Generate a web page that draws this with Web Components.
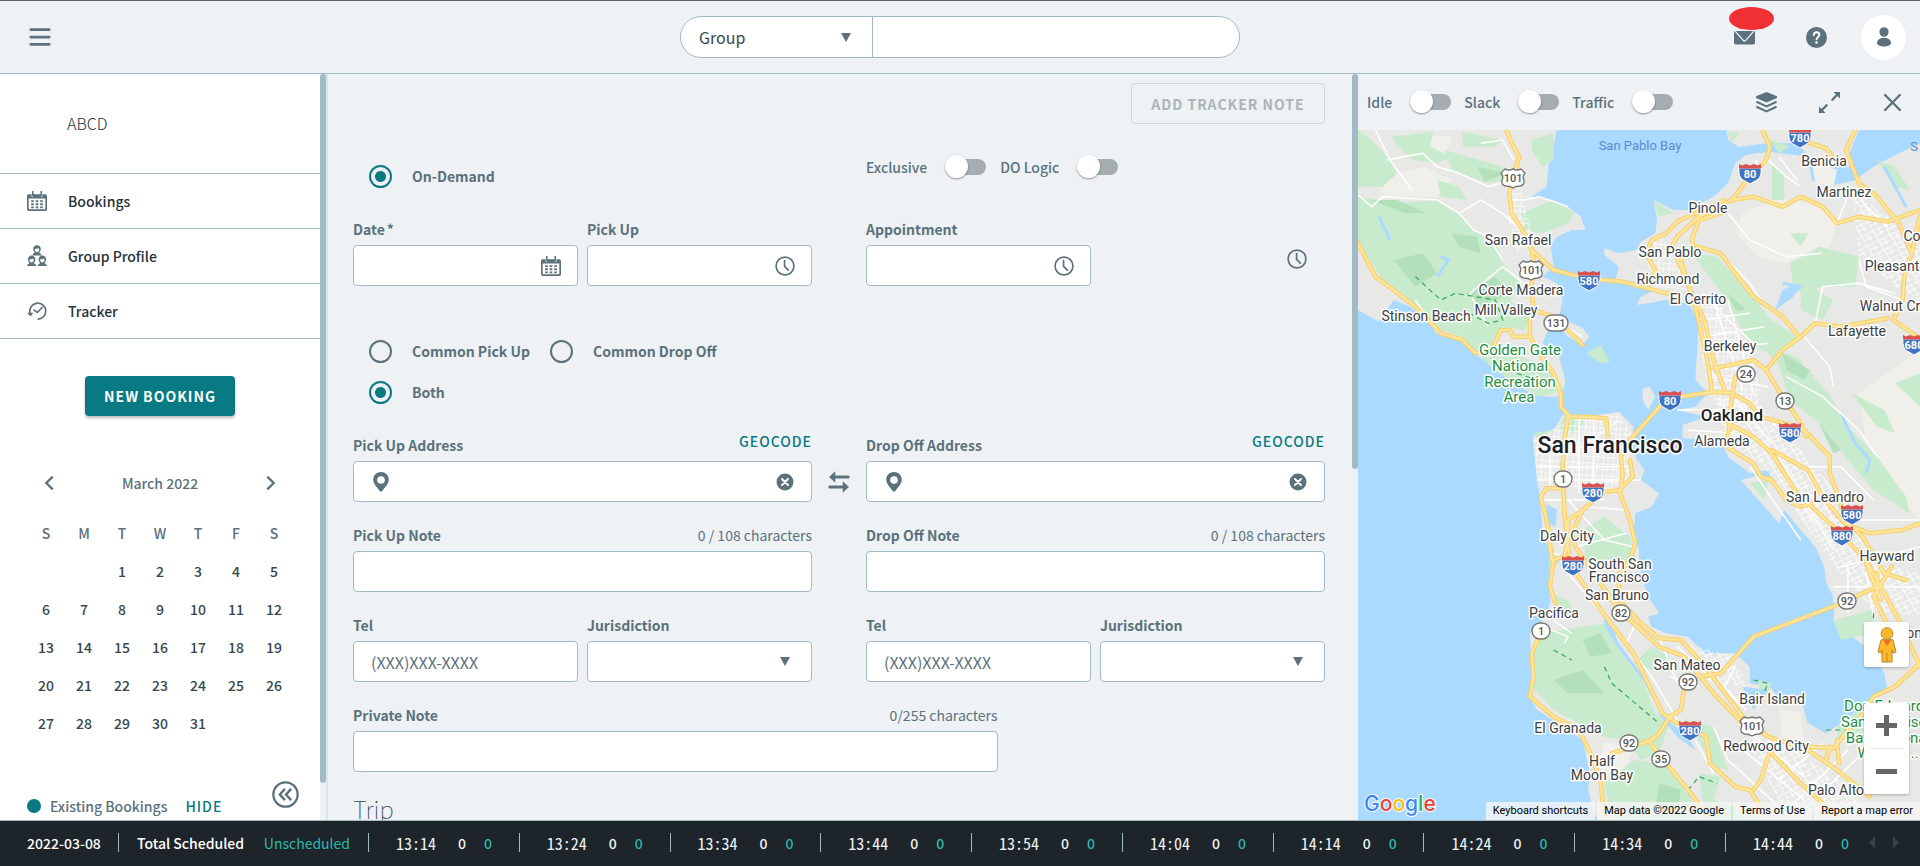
<!DOCTYPE html>
<html lang="en">
<head>
<meta charset="utf-8">
<title>Bookings</title>
<style>
body { margin: 0; font-family: "Noto Sans CJK SC", sans-serif; color: #5b717b; }
</style>
</head>
<body>
<booking-app></booking-app>
<script>
const BASE = `
  :host, * { box-sizing: border-box; }
  button, input, select { font: inherit; color: inherit; margin: 0; }
  button { background: none; border: 0; padding: 0; cursor: pointer; }
`;
function define(name, render) {
  customElements.define(name, class extends HTMLElement {
    connectedCallback() {
      if (this.shadowRoot) return;
      const tpl = document.createElement('template');
      tpl.innerHTML = render(this);
      this.attachShadow({ mode: 'open' }).append(tpl.content.cloneNode(true));
      const base = document.createElement('style');
      base.textContent = BASE;
      this.shadowRoot.prepend(base);
    }
  });
}
const attr = (el, n, d = '') => el.getAttribute(n) ?? d;

/* ---------- icons ---------- */
const ICONS = {
  menu: `<path d="M2 4h20M2 12h20M2 20h20" stroke="currentColor" stroke-width="3" stroke-linecap="round"/>`,
  calendar: `<path fill="currentColor" fill-rule="evenodd" d="M2 4h3.500v3h1.500V4h10v3h1.500V4H22q2 0 2 2v16q0 2-2 2H2q-2 0-2-2V6q0-2 2-2zM2 9V21q0 1 1 1h18q1 0 1-1V9z"/><g fill="currentColor"><path d="M6 0h1.800v6H6zM16.200 0H18v6h-1.800zM5 11h3.200v2.200H5zM10.400 11h3.200v2.200h-3.200zM15.800 11h3.200v2.200h-3.200zM5 14.800h3.200V17H5zM10.400 14.800h3.200V17h-3.200zM15.800 14.800h3.200V17h-3.200zM5 18.500h3.200v2.200H5zM10.400 18.500h3.200v2.200h-3.200zM15.800 18.500h3.200v2.200h-3.200z"/></g>`,
  group: `<g fill="currentColor"><path d="M12-1a4.500 4.500 0 0 1 4.500 4.700c0 1.800-.7 2.900-1.700 3.900 0 1.400 2.400 1.600 2.800 3.900H6.400c.4-2.300 2.800-2.500 2.800-3.900-1-1-1.700-2.100-1.700-3.900A4.500 4.500 0 0 1 12-1z"/><path d="M5.600 11.500a4.500 4.500 0 0 1 4.500 4.700c0 1.800-.7 2.900-1.700 3.900 0 1.400 2.400 1.600 2.800 3.900H0c.4-2.300 2.800-2.500 2.800-3.900-1-1-1.700-2.100-1.700-3.900a4.500 4.500 0 0 1 4.500-4.700zM18.400 11.500a4.500 4.500 0 0 1 4.500 4.700c0 1.800-.7 2.900-1.700 3.900 0 1.400 2.400 1.600 2.800 3.900H12.800c.4-2.300 2.800-2.500 2.800-3.900-1-1-1.700-2.100-1.700-3.900a4.500 4.500 0 0 1 4.500-4.700z"/></g><g fill="#fff"><path d="M9.300 3.500c2 0 3.400-.4 4.200-1.100.3.700.7 1 1.200 1.100 0 2.200-1.100 3.900-2.700 3.900S9.300 5.700 9.300 3.500zM2.900 16c2 0 3.400-.4 4.200-1.100.3.700.7 1 1.200 1.100 0 2.200-1.100 3.900-2.700 3.900S2.900 18.200 2.900 16zM15.700 16c2 0 3.400-.4 4.200-1.100.3.700.7 1 1.200 1.100 0 2.200-1.100 3.900-2.700 3.900s-2.700-1.700-2.700-3.900z"/></g>`,
  tracker: `<g fill="none" stroke="currentColor" stroke-width="2" stroke-linecap="round"><path d="M3.600 14.500A9.600 9.600 0 1 1 13.500 21.800"/><path d="M8.500 11l4 2.800 5.500-6"/></g><path fill="currentColor" d="M0 14h7.500L4.200 18.500z"/>`,
  left: `<path d="M15 5l-7 7 7 7" fill="none" stroke="currentColor" stroke-width="2.500"/>`,
  right: `<path d="M9 5l7 7-7 7" fill="none" stroke="currentColor" stroke-width="2.500"/>`,
  collapse: `<g fill="none" stroke="currentColor"><circle cx="12" cy="12" r="10.800" stroke-width="2"/><path d="M11.500 7L7 12l4.500 5M17 7l-4.500 5 4.500 5" stroke-width="2.200"/></g>`,
  clock: `<g fill="none" stroke="currentColor"><circle cx="12" cy="12" r="10.700" stroke-width="2"/><path d="M11.500 5.500v7l4.500 4.500" stroke-width="2" stroke-linecap="round"/></g>`,
  pin: `<path fill="currentColor" fill-rule="evenodd" d="M12 0c5.300 0 9.300 4 9.300 9.300 0 5.200-4.800 9.200-7.800 13.500q-1.500 1.800-3 0C7.500 18.500 2.700 14.500 2.700 9.300 2.700 4 6.700 0 12 0zM12 5a4.600 4.600 0 1 0 0 9.200A4.600 4.600 0 0 0 12 5z"/>`,
  clear: `<circle cx="12" cy="12" r="11.300" fill="currentColor"/><path d="M8 8l8 8M16 8l-8 8" stroke="#fff" stroke-width="2.600" stroke-linecap="round"/>`,
  swap: `<path d="M5 6h18M1 18h18" stroke="currentColor" stroke-width="3.600" stroke-linecap="round"/><path fill="currentColor" d="M7.500-1v14L0 6zM16.500 11v14L24 18z"/>`,
  mail: `<path fill="currentColor" d="M0 4.500h24v13.500q0 2-2 2H2q-2 0-2-2z"/><path d="M1 4.500l9.800 11q1.200 1.200 2.400 0L23 4.500" fill="none" stroke="#eef2f5" stroke-width="1.500"/>`,
  help: `<circle cx="12" cy="12" r="12" fill="currentColor"/><path d="M8.800 9.300q.2-3.300 3.300-3.300t3.200 2.900c0 2.500-3.200 2.600-3.200 5.200" fill="none" stroke="#fff" stroke-width="2.200" stroke-linecap="round"/><circle cx="12" cy="17.700" r="1.500" fill="#fff"/>`,
  user: `<g fill="currentColor"><ellipse cx="12" cy="6" rx="5.500" ry="5.800"/><path d="M3.500 19c.8-4 4-6 8.500-6s7.700 2 8.500 6c0 2.500-3.500 4.500-8.500 4.500S3.500 21.500 3.500 19z"/></g>`,
  layers: `<path fill="currentColor" d="M12 0l12 4.800v2L12 12 0 6.800v-2z"/><path d="M.5 11.200L12 16.400l11.500-5.200M.5 16.900L12 22.100l11.500-5.200" fill="none" stroke="currentColor" stroke-width="2.400" stroke-linejoin="round"/>`,
  expand: `<path d="M21 3l-5.800 5.800M3 21l5.800-5.800" stroke="currentColor" stroke-width="2.600" stroke-linecap="round"/><path fill="currentColor" d="M16.500 0H24v7.500zM7.500 24H0v-7.500z"/>`,
  close: `<path d="M3.500 3.500l17 17M20.500 3.500l-17 17" stroke="currentColor" stroke-width="2.600" stroke-linecap="round"/>`
};
define('ui-icon', el => `<style>
  :host { display: block; flex: none; width: 20px; height: 20px; }
  svg { display: block; width: 100%; height: 100%; overflow: visible; }
</style><svg viewBox="0 0 24 24" aria-hidden="true">${ICONS[attr(el, 'name')]}</svg>`);

/* ---------- controls ---------- */
define('toggle-switch', el => `<style>
  :host { display: block; }
  label { display: flex; align-items: center; font-size: 14px; line-height: 24px; font-weight: 500; gap: 18px; }
  input { appearance: none; position: relative; width: 41px; height: 16px; border-radius: 8px; margin: 0;
    background: linear-gradient(90deg, transparent 8px, #a6adb0 8px); }
  input::before { content: ""; position: absolute; left: 0; top: -4px; width: 23px; height: 23px; border-radius: 50%; background: #fff; box-shadow: 0 1px 2px #0006; }
</style><label>${attr(el, 'label')}<input type="checkbox" role="switch"></label>`);

define('radio-option', el => `<style>
  :host { display: block; }
  label { display: flex; align-items: center; gap: 20px; font-size: 14px; line-height: 24px; font-weight: 700; }
  input { appearance: none; width: 23px; height: 23px; border: 2px solid #5b717b; border-radius: 50%; }
  input:checked { border-color: #077a83; background: radial-gradient(circle, #077a83 5px, transparent 6px); }
</style><label><input type="radio" ${el.hasAttribute('checked') ? 'checked' : ''}>${attr(el, 'label')}</label>`);

define('form-field', el => {
  const type = attr(el, 'type', 'text');
  const control = type === 'select'
    ? `<select id="c"><option></option></select><span class="tri"></span>`
    : `<input id="c" type="text" placeholder="${attr(el, 'placeholder')}">`;
  return `<style>
  :host { display: block; min-width: 0; }
  .top { display: flex; justify-content: space-between; height: 20px; margin-bottom: 6px; font-size: 14px; line-height: 20px; }
  label { font-weight: 700; }
  .req { margin-left: 2px; }
  .note { font-weight: 400; }
  .top button { align-self: start; height: 12px; line-height: 12px; color: #077a83; font-weight: 500; letter-spacing: 1px; }
  .box { display: flex; align-items: center; height: 41px; padding: 0 16px 0 17px; background: #fff; border: 1px solid #a2bac3; border-radius: 4px; }
  input, select { flex: 1; min-width: 0; width: 100%; height: 100%; border: 0; outline: 0; background: none; font-size: 16px; padding: 0; appearance: none; }
  ::placeholder { color: #5b717b; opacity: 1; font-weight: 400; }
  .tri { width: 0; border: 5px solid transparent; border-top: 9px solid #5b717b; border-bottom: 0; margin-right: 5px; }
  .clear { width: 18px; height: 18px; margin-right: 1px; }
</style><div class="top"><label for="c">${attr(el, 'label')}${el.hasAttribute('required') ? '<span class="req">*</span>' : ''}</label>${
    el.hasAttribute('note') ? `<span class="note">${attr(el, 'note')}</span>` : ''}${
    el.hasAttribute('action') ? `<button type="button">${attr(el, 'action')}</button>` : ''}</div>
<div class="box">${el.hasAttribute('pin') ? '<ui-icon name="pin"></ui-icon>' : ''}${control}${
    el.hasAttribute('icon') ? `<button type="button" aria-label="${attr(el, 'icon')}"><ui-icon class="${attr(el, 'icon')}" name="${attr(el, 'icon')}"></ui-icon></button>` : ''}</div>`;
});

/* ---------- header ---------- */
define('app-header', () => `<style>
  :host { display: grid; grid-template-columns: 1fr 560px 1fr; align-items: center; height: 74px; padding: 0 14px; border-top: 1px solid #5f6368; border-bottom: 1px solid #a2bac3; background: #eef2f5; }
  .menu { justify-self: start; margin-left: 15px; }
  .menu ui-icon { width: 22px; height: 22px; }
  .search { display: flex; height: 42px; border: 1px solid #a2bac3; border-radius: 21px; background: #fff; overflow: hidden; }
  .sel { display: flex; align-items: center; width: 192px; padding: 0 21px 0 18px; border-right: 1px solid #a2bac3; }
  select { appearance: none; flex: 1; border: 0; background: none; outline: 0; font-size: 16px; color: #37474f; height: 100%; padding: 0; }
  .tri { border: 5px solid transparent; border-top: 9px solid #5b717b; border-bottom: 0; }
  .search input { flex: 1; min-width: 0; border: 0; outline: 0; background: none; padding: 0 16px; }
  .actions { display: flex; align-items: center; justify-self: end; gap: 46px; }
  .mail { position: relative; display: block; margin-right: 5px; }
  .help { display: block; }
  .badge { position: absolute; left: -5px; top: -20px; width: 45px; height: 23px; border-radius: 50%; background: #f13033; }
  .avatar { display: grid; place-items: center; width: 45px; height: 45px; border-radius: 50%; background: #fff; margin-left: -12px; }
  .mail ui-icon, .help ui-icon { width: 21px; height: 21px; }
</style>
<button class="menu" aria-label="Menu"><ui-icon name="menu"></ui-icon></button>
<div class="search"><div class="sel"><select aria-label="Search by"><option>Group</option></select><span class="tri"></span></div><input type="text" aria-label="Search"></div>
<div class="actions">
  <button class="mail" aria-label="Messages"><ui-icon name="mail"></ui-icon><span class="badge"></span></button>
  <button class="help" aria-label="Help"><ui-icon name="help"></ui-icon></button>
  <button class="avatar" aria-label="Account"><ui-icon name="user"></ui-icon></button>
</div>`);

/* ---------- sidebar ---------- */
define('nav-item', el => `<style>
  :host { display: block; border-bottom: 1px solid #a2bac3; }
  a { display: flex; align-items: center; gap: 21px; height: 54px; padding-left: 27px; font-size: 14px; line-height: 20px; font-weight: 500; color: #263238; text-decoration: none; }
  ui-icon { color: #5b717b; }
</style><a href="#"><ui-icon name="${attr(el, 'icon')}"></ui-icon><slot></slot></a>`);

define('month-calendar', () => {
  const cells = [...Array(2).fill(''), ...Array.from({ length: 31 }, (_, i) => i + 1), '', ''];
  const rows = [];
  for (let i = 0; i < 35; i += 7) rows.push('<tr>' + cells.slice(i, i + 7).map(c => `<td>${c}</td>`).join('') + '</tr>');
  return `<style>
  :host { display: block; width: 266px; margin: 0 auto; font-size: 14px; line-height: 20px; }
  header { display: flex; justify-content: space-between; align-items: center; height: 38px; padding: 0 12px; font-weight: 500; }
  header ui-icon { width: 22px; height: 22px; }
  table { border-collapse: collapse; table-layout: fixed; width: 100%; margin-top: 12px; }
  th, td { height: 38px; padding: 0; text-align: center; font-weight: 500; }
  td { color: #37474f; }
</style><header><button aria-label="Previous month"><ui-icon name="left"></ui-icon></button><span>March 2022</span><button aria-label="Next month"><ui-icon name="right"></ui-icon></button></header>
<table><thead><tr>${[...'SMTWTFS'].map(d => `<th>${d}</th>`).join('')}</tr></thead><tbody>${rows.join('')}</tbody></table>`;
});

define('scroll-rail', () => `<style>
  :host { display: block; flex: none; width: 6px; background: #eef2f5; }
  div { height: var(--thumb); border-radius: 3px; background: #a2bac3; }
</style><div></div>`);

define('side-nav', () => `<style>
  :host { display: flex; background: #fff; min-height: 0; border-right: 2px solid #dbe5ea; overflow: hidden; }
  .body { flex: 1; min-width: 0; position: relative; }
  .org { height: 100px; padding: 38px 0 0 67px; font-size: 16px; line-height: 22px; font-weight: 300; color: #263238; border-bottom: 1px solid #a2bac3; }
  .new { display: block; width: 150px; height: 40px; margin: 37px auto 48px; border-radius: 4px; background: #077a83; color: #fff; font-size: 14px; line-height: 20px; font-weight: 700; letter-spacing: 1px; box-shadow: 0 2px 3px #0004; }
  .legend { display: flex; align-items: center; margin-top: 53px; padding-left: 27px; font-size: 14px; line-height: 22px; font-weight: 500; }
  .dot { width: 14px; height: 14px; border-radius: 50%; background: #077a83; margin-right: 9px; }
  .hide { color: #077a83; font-weight: 500; letter-spacing: 1px; margin-left: 18px; line-height: 22px; }
  .collapse { position: absolute; right: 21px; bottom: 12px; }
  .collapse ui-icon { width: 27px; height: 27px; }
  scroll-rail { --thumb: 95%; }
</style>
<div class="body">
  <div class="org">ABCD</div>
  <nav><nav-item icon="calendar">Bookings</nav-item><nav-item icon="group">Group Profile</nav-item><nav-item icon="tracker">Tracker</nav-item></nav>
  <button class="new">NEW BOOKING</button>
  <month-calendar></month-calendar>
  <div class="legend"><span class="dot"></span>Existing Bookings<button class="hide">HIDE</button></div>
  <button class="collapse" aria-label="Collapse"><ui-icon name="collapse"></ui-icon></button>
</div>
<scroll-rail></scroll-rail>`);

/* ---------- form ---------- */
define('booking-form', () => `<style>
  :host { display: flex; min-width: 0; min-height: 0; overflow: hidden; background: #eef2f5; }
  form { flex: 1; min-width: 0; padding: 9px 27px 0 25px; }
  .add { display: block; height: 41px; width: 194px; margin-left: auto; border: 1px solid #cdd6da; border-radius: 4px; font-size: 14px; line-height: 20px; font-weight: 700; letter-spacing: 1px; color: #a9b5ba; }
  .two { display: grid; grid-template-columns: 1fr 1fr; column-gap: 54px; }
  .pair { display: grid; grid-template-columns: 1fr 1fr; column-gap: 9px; }
  .mode { margin-top: 31px; }
  .mode radio-option { padding: 9px 0 0 16px; }
  .switches { display: flex; gap: 14px; }
  .when > div:last-child ui-icon { justify-self: end; margin: 30px 18px 0 0; }
  .common { display: grid; grid-template-columns: auto 1fr; gap: 17px 20px; padding-left: 16px; margin: 53px 0 31px; }
  .addr { display: grid; grid-template-columns: 1fr 54px 1fr; }
  .addr button { align-self: end; justify-self: center; height: 41px; }
  .two + .two, .addr + .two, .private { margin-top: 23px; }
  .two.when { margin-top: 31px; }
  .private { width: calc(66% + 3px); }
  h2 { margin: 19px 0 0; font-size: 24px; line-height: 36px; font-weight: 100; color: #37474f; }
  scroll-rail { --thumb: 53%; }
</style>
<form>
  <button class="add" type="button" disabled>ADD TRACKER NOTE</button>
  <div class="two mode">
    <radio-option label="On-Demand" checked></radio-option>
    <div class="switches"><toggle-switch label="Exclusive"></toggle-switch><toggle-switch label="DO Logic"></toggle-switch></div>
  </div>
  <div class="two when">
    <div class="pair"><form-field label="Date" required icon="calendar"></form-field><form-field label="Pick Up" icon="clock"></form-field></div>
    <div class="pair"><form-field label="Appointment" icon="clock"></form-field><ui-icon name="clock"></ui-icon></div>
  </div>
  <div class="common">
    <radio-option label="Common Pick Up"></radio-option><radio-option label="Common Drop Off"></radio-option>
    <radio-option label="Both" checked></radio-option>
  </div>
  <div class="addr">
    <form-field label="Pick Up Address" action="GEOCODE" icon="clear" pin></form-field>
    <button type="button" aria-label="Swap addresses"><ui-icon name="swap"></ui-icon></button>
    <form-field label="Drop Off Address" action="GEOCODE" icon="clear" pin></form-field>
  </div>
  <div class="two">
    <form-field label="Pick Up Note" note="0 / 108 characters"></form-field>
    <form-field label="Drop Off Note" note="0 / 108 characters"></form-field>
  </div>
  <div class="two">
    <div class="pair"><form-field label="Tel" placeholder="(XXX)XXX-XXXX"></form-field><form-field label="Jurisdiction" type="select"></form-field></div>
    <div class="pair"><form-field label="Tel" placeholder="(XXX)XXX-XXXX"></form-field><form-field label="Jurisdiction" type="select"></form-field></div>
  </div>
  <form-field class="private" label="Private Note" note="0/255 characters"></form-field>
  <h2>Trip</h2>
</form>
<scroll-rail></scroll-rail>`);

/* ---------- map ---------- */
/* Roads are drawn twice: a darker casing, then the lighter fill. */
const HIGHWAYS = [
  'M430 390L445 430 465 470 450 530 438 580 445 640 480 700 500 750 560 810 650 835 750 845 870 880 905 882',
  'M500 750L508 800 498 860 505 930 495 960 495 1010 520 1060 560 1120 580 1180 580 1220 605 1250 650 1250 705 1255 710 1320',
  'M22 730L70 830 120 870 180 920 250 1000 310 1020 345 1060 390 1050 415 990 440 990 450 1010 495 1010',
  'M505 930L560 950 600 990 640 1035',
  'M1135 390L1155 440 1145 480 1100 530 1050 600 960 650 900 710 885 740 910 800 940 880 965 990 985 1090 995 1170',
  'M1030 600L900 665 870 700 830 720 815 760 840 810 825 850',
  'M1020 640L960 660 940 720 945 740 910 780 935 870 975 960 1000 1080 1030 1170',
  'M1050 600L1110 590 1190 620 1240 590 1300 620 1340 670 1400 650 1480 665 1568 630',
  'M1390 390L1365 450 1400 550 1450 590 1510 670 1545 760 1525 830 1520 900 1495 960 1560 1010',
  'M1240 420L1310 445 1330 475',
  'M1568 650L1545 760M955 740L1020 760 1060 820 1110 890 1190 950 1235 1010',
  'M770 1320L860 1210 910 1190 1000 1175 1050 1180 1100 1210 1130 1250 1210 1275 1250 1290 1320 1370 1320 1420 1350 1510 1360 1560 1410 1610 1470 1720 1530 1740',
  'M1000 1105L1110 1080 1145 1110 1190 1050 1240 1010 1280 970 1350 980 1480 955',
  'M1145 1110L1190 1190 1240 1270 1255 1310',
  'M1060 1130L1050 1200 1040 1270 1110 1310 1160 1360 1230 1480 1330 1580 1420 1680 1450 1740 1510 1860 1568 2000',
  'M1045 1270L1035 1340 1110 1390 1130 1430 1160 1440 1200 1500 1240 1520 1270 1510',
  'M1160 1350L1260 1410 1300 1490 1360 1570 1430 1600 1520 1590 1568 1570',
  'M770 1320L745 1370 750 1420 745 1470 700 1475 640 1530 600 1560 600 1640 610 1700 690 1830 780 1960 820 2050 860 2140 900 2170 980 2210 990 2290 1060 2360 1100 2370 1140 2440',
  'M770 1380L778 1430 740 1470 770 1560 785 1630 770 1680 740 1720 740 1800 800 1870 850 1915 910 1920 970 1990 1080 2150 1150 2210 1260 2250 1340 2310 1430 2390',
  'M600 1250L590 1320 585 1400 590 1540 600 1650',
  'M585 1465L540 1465 525 1490 545 1580 555 1680 590 1670 600 1620M560 1680L550 1760 565 1810',
  'M640 1530L610 1600 620 1640 670 1720 740 1830 850 1940 920 1970 1000 2080 1080 2170',
  'M525 1900L500 1960 505 2030 495 2090 560 2150 630 2190 670 2280 690 2350 700 2460',
  'M960 2030L1020 2020 1110 1910 1340 1815 1450 1760 1450 1720',
  'M920 2060L910 2130 880 2150 850 2200 830 2220 720 2260',
  'M820 2220L870 2290 930 2370 980 2440',
  'M1160 2240L1130 2340 1110 2370M1160 2260L1230 2340 1340 2450M1320 2240L1310 2280M1340 2220L1345 2290M1260 2240L1330 2245 1370 2190 1400 2160 1440 2090 1500 2060 1568 1990',
  'M1420 1690L1460 1800M1490 1700L1440 1790 1490 1900'
];
const MINOR = [
  'M22 585L60 620 90 590 240 600 300 640 340 690 380 710 420 780M70 390L110 480 170 570M100 480L200 460 240 500 300 520 380 560 430 545',
  'M440 600L480 600 520 590 600 620M360 430L420 420 450 480M300 640L360 600 420 640 470 690',
  'M1150 480L1200 530 1240 560M1180 470L1230 540M1340 670L1380 560 1420 620 1480 680M1080 560L1120 480M1040 640L1100 720 1200 770 1300 760',
  'M1020 760L1100 850 1150 930M1250 1010L1320 1100 1330 1160M1280 970L1300 860 1400 850 1500 880M1400 780L1420 860 1520 900M1120 1040L1040 960 970 880',
  'M1200 1130L1300 1190 1400 1290 1450 1370M1260 1400L1350 1400 1440 1500M1180 1370L1330 1650M1130 1320L1280 1570M1100 1400L1240 1620M1300 1560L1568 1560M1350 1700L1568 1640M1330 1760L1568 1760M1370 1690V1840M1420 1720L1440 1850',
  'M1000 900L1080 1170M1040 900L1110 1180M960 960L1100 940M970 1010L1140 980M980 1050L1150 1030M990 1130L1150 1160M900 1230L1050 1230M930 1290L1060 1300M1060 1200L1160 1330M1090 1190L1210 1320',
  'M515 1400H760M515 1440H800M520 1500H700M530 1340H760M550 1310V1460M630 1260V1480M670 1250V1450M740 1260L640 1340M600 1500L700 1620 780 1640M620 1640L760 1600M650 1520L760 1530',
  'M560 1660L640 1690 740 1680M700 1740L800 1720M600 1720L740 1900 830 2030 900 2160M790 1860L760 1930M850 1910L900 2050M900 1940L1080 2120M880 2030L960 2060M1060 2000L1030 2060 1090 2130',
  'M1100 2200L1250 2330M1070 2240L1250 2400M1000 2180L1040 2280 1200 2440M1180 2340L1300 2230M1230 2400L1370 2250M950 2220L1000 2320M1240 2440L1400 2270M530 1880L600 1910 590 1930M560 1860L610 1900',
  'M560 960L640 1010M380 980L330 880 420 800 500 870M240 1000L180 900'
];
const GREENS = [
  'M22 590L120 610 240 600 320 660 350 700 400 720 420 790 470 850 440 900 500 950 480 990 420 980 395 1040 350 1060 310 1010 250 990 160 900 90 840 22 730z',
  'M22 390L60 420 110 480 130 520 90 560 22 560zM110 410L230 395 220 440 280 470 240 490 170 480zM260 450L420 500 430 540 380 550 280 510zM240 540L300 560 320 600 250 590zM310 395L420 420 400 440 310 440z',
  'M470 640L560 600 620 640 600 670 530 700 480 690zM500 420L560 400 560 480 530 500 500 450zM355 1070L470 1070 560 1110 590 1170 520 1190 450 1150 400 1110z',
  'M650 1060L690 1035 715 1085 690 1090zM570 1290L590 1245 650 1255 620 1300zM505 1300L560 1290 520 1320zM835 600L890 640 850 650z',
  'M1160 490L1195 520 1195 600 1160 600zM1210 700L1260 700 1240 740zM1210 790L1290 740 1400 770 1390 860 1290 860 1270 890 1220 860zM940 760L1010 770 1100 880 1160 960 1230 1010 1170 1060 1200 1060 1240 1080 1260 1140 1210 1130 1150 1060 1100 1030 1030 890z',
  'M1170 1060L1260 1110 1330 1200 1350 1260 1450 1370 1530 1490 1540 1540 1440 1470 1370 1380 1290 1270 1210 1200zM1380 1180L1470 1230 1500 1300 1450 1280zM1500 1150L1568 1120 1568 1220zM1240 840L1330 900 1300 960 1240 930z',
  'M520 1900L640 1880 700 1870 740 1950 800 2030 840 2140 880 2170 850 2260 800 2280 760 2220 700 2210 560 2130 500 2060 500 1990z',
  'M550 1780L600 1800 620 1840 570 1850zM540 1520L560 1650 580 1680 550 1720zM640 1590L700 1550 770 1610 790 1690 720 1680 650 1680zM780 1990L830 1940 880 1970 860 2020z',
  'M780 2280L860 2290 930 2370 960 2460 720 2460 700 2350zM960 2320L1020 2330 1000 2400 1060 2420 1100 2460 980 2460zM930 2160L1000 2180 1040 2310 1000 2300zM1120 2040L1160 2050 1140 2100z',
  'M1330 1860L1440 1830 1440 1900 1350 1920zM1340 2180L1400 2130 1440 2180 1340 2220zM1100 1450L1150 1440 1140 1500z',
  'M1120 395L1150 410 1180 460 1210 440 1160 420zM1040 395L1070 400 1050 430zM1450 480L1500 500 1540 570 1500 560z'
];
const shieldI = (x, y, t) => `<g transform="translate(${x} ${y})"><path d="M-11-5Q-12 4-7 7-3 9 0 11 3 9 7 7 12 4 11-5z" fill="#3f75c4" stroke="#fff"/><path d="M-11-4.500v-4.500l3 1.500 4-1.500 4 1.500 4-1.500 4 1.500 3-1.500v4.500z" fill="#d9524f"/><text y="5" class="sh">${t}</text></g>`;
const shieldS = (x, y, t) => { const w = t.length > 2 ? 24 : 18; return `<g transform="translate(${x} ${y})"><rect x="${-w / 2}" y="-8" width="${w}" height="16" rx="8" fill="#fff" stroke="#777" stroke-width="1.400"/><text y="4" class="sh n">${t}</text></g>`; };
const shieldU = (x, y, t) => `<g transform="translate(${x} ${y})"><path d="M-8-9q4 2 8 0 4 2 8 0l4 4q-3 4-1 7 1 5-4 6-4 0-7 2-3-2-7-2-5-1-4-6 2-3-1-7z" fill="#fff" stroke="#777" stroke-width="1.400"/><text y="4" class="sh n">${t}</text></g>`;
const label = (x, y, t, c = '') => `<text x="${x}" y="${y}" class="${c}">${t}</text>`;

define('bay-map', () => `<style>
  :host { display: block; position: relative; overflow: hidden; background: #aadaff; }
  svg.map { position: absolute; inset: 0; width: 100%; height: 100%; }
  text { font: 400 14px Roboto, sans-serif; fill: #3c4043; text-anchor: middle; paint-order: stroke; stroke: #fff; stroke-width: 3px; stroke-linejoin: round; }
  text.sh { font-size: 11px; font-weight: 700; stroke: none; fill: #fff; }
  text.sh.n { fill: #555; font-weight: 500; }
  text.park { fill: #1e8e3e; font-size: 15px; } text.water { fill: #5b8bd0; stroke: none; font-size: 13px; }
  text.sf { font-size: 23px; font-weight: 500; fill: #202124; } text.oak { font-size: 17px; font-weight: 500; fill: #202124; }
  path.l { vector-effect: non-scaling-stroke; }
  .ctl { position: absolute; right: 11px; width: 45px; background: #fff; border-radius: 2px; box-shadow: 0 1px 3px #0004; display: grid; place-items: center; }
  .peg { bottom: 153px; height: 45px; }
  .zoom { bottom: 26px; height: 91px; }
  .zoom button { width: 45px; height: 45px; display: grid; place-items: center; }
  .zoom hr { width: 34px; margin: 0; border: 0; border-top: 1px solid #e6e6e6; }
  .logo { position: absolute; left: 6px; bottom: 1px; width: 74px; height: 28px; }
  .logo text { font: 500 21px Inter, sans-serif; text-anchor: start; stroke-width: 2px; }
  .terms { position: absolute; right: 0; bottom: 0; display: flex; height: 18px; font: 11px/18px Roboto, sans-serif; color: #000; }
  .terms > * { background: #f5f5f5cc; padding: 0 7px; color: #000; text-decoration: none; margin-left: 2px; white-space: nowrap; }
</style>
<svg class="map" viewBox="1358 130 562 690" preserveAspectRatio="xMinYMin slice" role="img" aria-label="Map of the San Francisco Bay Area">
<defs>
  <pattern id="grid" width="36" height="32" patternUnits="userSpaceOnUse" patternTransform="rotate(-28)"><path d="M0 8H36M10 0V32M26 8V32M10 22H36" stroke="#fff" stroke-width="2.500" fill="none"/></pattern>
  <pattern id="grid2" width="28" height="36" patternUnits="userSpaceOnUse" patternTransform="rotate(4)"><path d="M0 8H28M8 0V36M20 8V36M0 24H28" stroke="#fff" stroke-width="2.200" fill="none"/></pattern>
</defs>
<g transform="translate(1350 0) scale(.3635 .33333)">
  <g stroke="#bfe1fb" stroke-width="1.500" opacity=".6"><path d="M93 390V2460M885 390V2460M22 648H1568M22 1513H1568M22 2377H1568"/></g>
  <g fill="#e8e8e6">
    <path d="M22 390H568L560 440 548 480 540 560 500 590 560 600 600 620 635 650 648 690 610 690 570 710 552 735 560 800 530 830 570 850 585 900 575 950 640 985 658 1010 640 1035 600 1010 580 985 545 990 530 1030 575 1070 592 1140 590 1160 570 1190 540 1190 500 1180 450 1150 410 1110 340 1060 300 1020 240 1000 210 960 165 920 120 900 80 965 22 930z"/>
    <path d="M503 1310L560 1290 585 1245 650 1250 740 1235 780 1280 775 1340 790 1380 810 1410 800 1440 850 1480 830 1520 785 1540 780 1600 795 1650 795 1700 820 1790 850 1840 820 1850 830 1880 870 1900 930 1910 975 1960 1060 1960 1100 2000 1100 2050 1155 2060 1180 2095 1240 2100 1260 2170 1310 2200 1350 2170 1410 2120 1440 2090 1480 2080 1470 2020 1440 1960 1370 1900 1330 1860 1335 1800 1310 1750 1305 1700 1280 1640 1240 1590 1195 1530 1180 1570 1075 1440 1130 1425 1160 1430 1150 1410 1100 1420 1040 1370 1020 1320 915 1315 915 1275 980 1250 900 1230 950 1220 985 1180 950 1140 960 960 930 910 870 900 790 915 800 890 830 875 780 860 730 840 740 800 700 765 700 745 740 760 790 750 800 725 840 700 845 660 835 600 890 630 930 630 1000 590 1040 550 1060 490 1090 465 1150 455 1260 470 1270 540 1310 560 1390 540 1440 500 1490 470 1568 430V2460H680L665 2410 655 2370 660 2320 640 2220 600 2190 515 2130 492 2090 500 2010 495 1900 540 1850 550 1810 548 1650 530 1600 520 1470 515 1450z"/>
    <path d="M1035 390H1400L1370 470 1385 500 1340 500 1270 480 1230 430 1150 430 1070 440 1040 420zM805 1165L825 1160 840 1190 820 1230 805 1200zM1320 1690H1568V2060L1500 2060 1480 1960 1440 1830 1330 1810z"/>
  </g>
  <g fill="#f1efe9"><path d="M1180 590L1300 620 1340 670 1320 740 1200 790 1120 770 1060 700 1080 640zM1400 1180L1568 1050V1560L1500 1480 1420 1330zM150 400L280 410 260 470 200 450zM60 540L200 500 280 540 240 590 100 590zM1180 2120L1240 2140 1250 2220 1190 2220zM700 2230L790 2230 740 2340 680 2300zM1270 480L1340 510 1330 560 1280 550z"/></g>
  <g fill="#c9ebcd"><path d="${GREENS.join('')}"/></g>
  <g fill="#b3e0bb"><path d="M60 600L130 600 210 640 150 640zM350 500L430 520 370 545zM120 780L200 760 240 820 180 860zM280 700L350 710 360 760 300 740zM1190 1060L1265 1110 1250 1140 1200 1110zM640 1920L690 1900 720 1960 660 1970zM560 2040L640 2010 700 2080 600 2080zM850 2350L910 2370 900 2440 840 2420zM1290 1270L1350 1350 1330 1360zM1040 880L1090 930 1060 930zM320 880L400 830 440 880 360 920z"/></g>
  <g fill="url(#grid2)"><path d="M505 1320L600 1260 740 1240 775 1300 780 1440 700 1480 515 1440zM940 880L1010 900 1100 1040 1130 1180 1050 1260 985 1180 960 1000zM850 700L900 780 930 870 840 860 810 760zM430 480L470 560 500 700 460 760 430 640z"/></g>
  <g fill="url(#grid)"><path d="M1000 1190L1120 1200 1200 1300 1340 1480 1460 1690 1568 1720V1850L1440 1830 1320 1680 1200 1490 1130 1390 1040 1330zM1380 570L1500 670 1568 700V900L1500 860 1400 770zM1050 2140L1180 2220 1400 2380 1400 2440 1200 2440zM920 1930L1060 1970 1090 2060 990 2050z"/></g>
  <g fill="none" stroke="#aadaff" stroke-width="3"><path class="l" d="M700 1860L740 1940 810 2040 850 2120M1350 1240L1390 1330 1430 1380 1420 1420M1470 500L1500 560 1530 620M240 830L270 780 250 770M80 650L110 720 100 690M1190 850L1240 860 1200 900"/></g>
  <g fill="#aadaff"><path d="M540 1510L570 1530 565 1580 545 1570zM700 1880L720 1870 740 1940zM840 2130L930 2210 950 2250 900 2210zM1190 870L1230 850 1220 890 1170 930zM1080 2060L1150 2070 1110 2130zM1190 2080L1240 2080 1220 2110z"/></g>
  <g fill="none" stroke="#fff" stroke-width="1.500" stroke-linejoin="round"><path class="l" d="${MINOR.join('')}"/></g>
  <g fill="none" stroke="#34a35c" stroke-width="1.200" stroke-dasharray="5 4"><path class="l" d="M700 2000L720 2050 850 2170M180 830L250 900 290 880 400 900 420 960 380 970 310 930M460 1120L540 1150M560 1950L610 1980M930 2370L960 2330 1010 2350M1110 2040L1150 2050 1130 2100M1310 2190L1380 2190M1440 1840V1910"/></g>
  <g fill="none" stroke="#f6cf68" stroke-width="4.500" stroke-linejoin="round" stroke-linecap="round"><path class="l" d="${HIGHWAYS.join('')}"/></g>
  <g fill="none" stroke="#ffe49a" stroke-width="2.500" stroke-linejoin="round" stroke-linecap="round"><path class="l" d="${HIGHWAYS.join('')}"/></g>
</g>
${shieldU(1513, 178, '101')}${shieldU(1531, 270, '101')}${shieldU(1752, 726, '101')}
${shieldI(1800, 137, '780')}${shieldI(1750, 173, '80')}${shieldI(1589, 280, '580')}${shieldI(1670, 400, '80')}${shieldI(1790, 432, '580')}${shieldI(1852, 514, '580')}${shieldI(1842, 535, '880')}${shieldI(1593, 492, '280')}${shieldI(1573, 565, '280')}${shieldI(1690, 730, '280')}${shieldI(1914, 344, '680')}
${shieldS(1556, 323, '131')}${shieldS(1746, 374, '24')}${shieldS(1785, 401, '13')}${shieldS(1563, 479, '1')}${shieldS(1541, 631, '1')}${shieldS(1621, 613, '82')}${shieldS(1847, 601, '92')}${shieldS(1688, 682, '92')}${shieldS(1629, 743, '92')}${shieldS(1661, 759, '35')}
${label(1640, 150, 'San Pablo Bay', 'water')}${label(1914, 151, 'S', 'water')}
${label(1824, 166, 'Benicia')}${label(1844, 197, 'Martinez')}${label(1708, 213, 'Pinole')}${label(1518, 245, 'San Rafael')}${label(1670, 257, 'San Pablo')}${label(1668, 284, 'Richmond')}${label(1521, 295, 'Corte Madera')}${label(1698, 304, 'El Cerrito')}${label(1506, 315, 'Mill Valley')}${label(1426, 321, 'Stinson Beach')}${label(1892, 271, 'Pleasant')}${label(1912, 241, 'Co')}${label(1890, 311, 'Walnut Cr')}${label(1857, 336, 'Lafayette')}${label(1730, 351, 'Berkeley')}
${label(1520, 355, 'Golden Gate', 'park')}${label(1520, 371, 'National', 'park')}${label(1520, 387, 'Recreation', 'park')}${label(1519, 402, 'Area', 'park')}
${label(1732, 421, 'Oakland', 'oak')}${label(1722, 446, 'Alameda')}${label(1610, 453, 'San Francisco', 'sf')}${label(1825, 502, 'San Leandro')}${label(1567, 541, 'Daly City')}${label(1887, 561, 'Hayward')}${label(1620, 569, 'South San')}${label(1619, 582, 'Francisco')}${label(1617, 600, 'San Bruno')}${label(1554, 618, 'Pacifica')}${label(1687, 670, 'San Mateo')}${label(1772, 704, 'Bair Island')}${label(1568, 733, 'El Granada')}${label(1602, 766, 'Half')}${label(1602, 780, 'Moon Bay')}${label(1766, 751, 'Redwood City')}${label(1836, 795, 'Palo Alto')}
${label(1888, 711, 'Don Edwards', 'park')}${label(1888, 727, 'San Francisco', 'park')}${label(1888, 743, 'Bay National', 'park')}${label(1888, 758, 'Wildlife...', 'park')}${label(1914, 638, 'on')}
</svg>
<svg class="logo" viewBox="0 0 74 28" role="img" aria-label="Google"><text x="0" y="20"><tspan fill="#4285f4">G</tspan><tspan fill="#ea4335">o</tspan><tspan fill="#fbbc05">o</tspan><tspan fill="#4285f4">g</tspan><tspan fill="#34a853">l</tspan><tspan fill="#ea4335">e</tspan></text></svg>
<button class="ctl peg" aria-label="Street View"><svg width="20" height="36" viewBox="0 0 20 36"><g fill="#fbb829" stroke="#b8862b"><path d="M4 13Q10 10 16 13L19 25 16 26 15 23V35H5V23L4 26 1 25z"/><circle cx="10" cy="6.500" r="5.800"/></g><path d="M6 13h8l-4 6z" fill="#e8702a"/><path d="M10 26V35" stroke="#b8862b"/></svg></button>
<div class="ctl zoom"><button aria-label="Zoom in"><svg width="21" height="21"><path d="M0 10.500H21M10.500 0V21" stroke="#666" stroke-width="5"/></svg></button><hr><button aria-label="Zoom out"><svg width="21" height="21"><path d="M0 10.500H21" stroke="#666" stroke-width="5"/></svg></button></div>
<div class="terms"><a href="#">Keyboard shortcuts</a><span>Map data ©2022 Google</span><a href="#">Terms of Use</a><a href="#">Report a map error</a></div>`);

define('map-panel', () => `<style>
  :host { display: grid; grid-template-rows: 56px 1fr; min-width: 0; min-height: 0; background: #eef2f5; }
  .bar { display: flex; align-items: center; padding: 0 17px 0 9px; }
  .bar toggle-switch { margin-right: 13px; }
  .tools { display: flex; gap: 42px; margin-left: auto; }
  .tools ui-icon { width: 21px; height: 21px; }
</style>
<div class="bar"><toggle-switch label="Idle"></toggle-switch><toggle-switch label="Slack"></toggle-switch><toggle-switch label="Traffic"></toggle-switch>
<div class="tools"><button aria-label="Layers"><ui-icon name="layers"></ui-icon></button><button aria-label="Expand"><ui-icon name="expand"></ui-icon></button><button aria-label="Close"><ui-icon name="close"></ui-icon></button></div></div>
<bay-map></bay-map>`);

/* ---------- footer ---------- */
define('time-slot', el => `<style>
  :host { display: flex; align-items: center; height: 19px; padding-left: 27px; border-left: 1px solid #a2bac3; font-weight: 500; color: #f0f4f5; }
  time { flex: none; width: 62px; font-family: "Noto Sans Mono CJK SC", "Noto Sans CJK SC", sans-serif; font-size: 16px; }
  span { flex: none; width: 26px; }
  .un { width: 9px; color: #2bb8ab; }
</style><time>${attr(el, 'time')}</time><span>0</span><span class="un">0</span>`);

define('timeline-bar', () => `<style>
  :host { display: flex; align-items: center; height: 46px; padding: 0 0 2px 27px; border-top: 1px solid #a2bac3; background: #1d242a; color: #fff; font-size: 14px; line-height: 20px; font-weight: 500; }
  .date { width: 91px; }
  .legend { display: flex; align-items: center; justify-content: space-between; width: 250px; height: 19px; padding: 0 18px; border-left: 1px solid #a2bac3; }
  .un { color: #2bb8ab; font-weight: 400; }
  .slots { flex: 1; display: grid; grid-template-columns: repeat(9, 1fr) 134px; }
  .arrows { display: flex; gap: 18px; width: 61px; padding-left: 10px; }
  .arrows button { width: 6px; height: 12px; background: #37444c; clip-path: polygon(0 50%, 100% 0, 100% 100%); }
  .arrows .next { clip-path: polygon(100% 50%, 0 0, 0 100%); }
</style>
<span class="date">2022-03-08</span><div class="legend"><span>Total Scheduled</span><span class="un">Unscheduled</span></div>
<div class="slots">${['13:14', '13:24', '13:34', '13:44', '13:54', '14:04', '14:14', '14:24', '14:34', '14:44'].map(t => `<time-slot time="${t}"></time-slot>`).join('')}</div>
<div class="arrows"><button aria-label="Earlier"></button><button class="next" aria-label="Later"></button></div>`);

define('booking-app', () => `<style>
  :host { display: grid; grid-template-rows: auto minmax(0, 1fr) auto; height: 100vh; }
  main { display: grid; grid-template-columns: 328px minmax(0, 1030fr) minmax(0, 562fr); min-height: 0; }
</style><app-header></app-header><main><side-nav></side-nav><booking-form></booking-form><map-panel></map-panel></main><timeline-bar></timeline-bar>`);
</script>
</body>
</html>
